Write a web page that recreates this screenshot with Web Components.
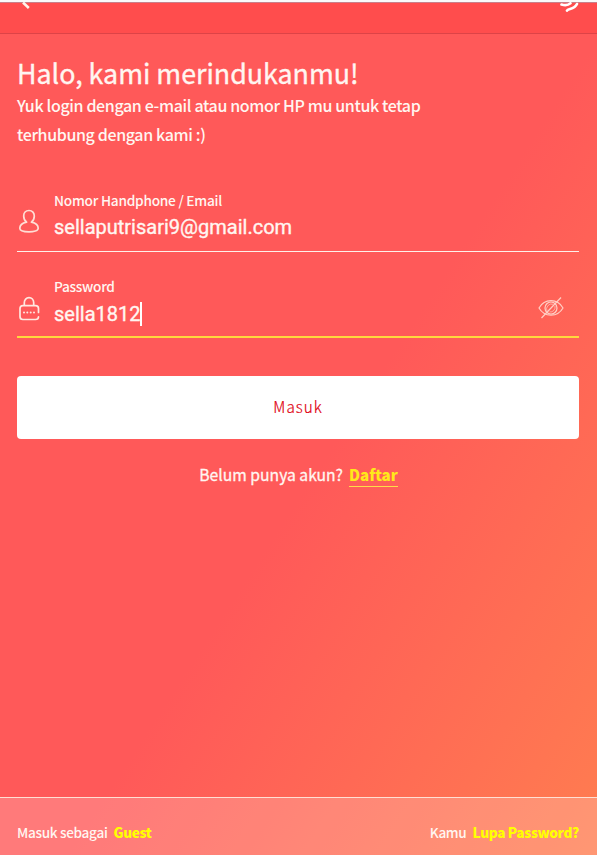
<!DOCTYPE html>
<html lang="id">
<head>
<meta charset="utf-8">
<title>Login</title>
<style>
html,body{margin:0;height:100%}
body{font-family:"Noto Sans CJK SC","Noto Sans CJK JP","Open Sans",sans-serif;color:#fff6f1;overflow:hidden}
</style>
</head>
<body>
<login-page></login-page>
<script>
const define=(name,html)=>customElements.define(name,class extends HTMLElement{
  constructor(){
    super();
    const t=document.createElement('template');
    t.innerHTML=html;
    this.attachShadow({mode:'open'}).append(t.content.cloneNode(true));
  }
});

define('top-bar',`<style>
:host{display:flex;justify-content:space-between;box-sizing:border-box;height:34px;padding:0 17px 0 19px;background:#ff4d4d;border-top:2px solid #fafafa;border-bottom:1px solid #dd4347;box-shadow:inset 0 1px #c9808a}
svg{display:block}
</style>
<svg width="14" height="10" viewBox="0 0 14 10"><path d="M4 .5L9.800 6" fill="none" stroke="#fff3ea" stroke-width="2.600"/></svg>
<svg width="24" height="12" viewBox="0 0 24 12" fill="none" stroke="#fff" stroke-width="2.600" stroke-linecap="round"><path d="M5.500 2.500C9 3.600 12.500 3 14.500 1.300M11 8.600C12 6.500 18.500 7.500 21 2"/></svg>`);

define('welcome-text',`<style>
:host{display:block;padding:23px 17px 0}
h1,p{margin:0;white-space:nowrap}
h1{font-size:26.800px;line-height:32px;font-weight:400;-webkit-text-stroke:.35px}
p{font-size:16px;line-height:29px;font-weight:500;letter-spacing:-.36px;padding-top:2px}
</style>
<h1><slot name="title"></slot></h1><p><slot></slot></p>`);

define('user-icon',`<style>:host,svg{display:block}</style>
<svg width="24" height="26" viewBox="0 0 24 26" fill="none" stroke="#ffded5" stroke-width="1.700" stroke-linejoin="round"><path d="M12 1.500C8.600 1.500 6.700 3.900 6.700 7C6.700 9.600 7.800 11.800 9.600 13.200C5.800 14 2.800 15.800 2.800 19.300C2.800 21.800 7.500 22.900 12 22.900S21.200 21.800 21.200 19.300C21.200 15.800 18.200 14 14.400 13.200C16.200 11.800 17.300 9.600 17.300 7C17.300 3.900 15.400 1.500 12 1.500Z"/></svg>`);

define('lock-icon',`<style>:host,svg{display:block}</style>
<svg width="24" height="26" viewBox="0 0 24 26" fill="none" stroke="#ffe8e0" stroke-width="1.700" stroke-linecap="round"><path d="M7.300 9.500V6.800C7.300 3.800 9.300 1.700 12 1.700S16.700 3.800 16.700 6.800V9.500M21.500 16.500V12.500Q21.500 9.700 18.500 9.700H5.800Q3 9.700 3 12.500V20.500Q3 23.500 5.800 23.500H18.500Q21.500 23.500 21.500 20.800"/><path d="M7 16.500h.01M10.300 16.500h.01M13.700 16.500h.01M17 16.500h.01" stroke-width="2"/></svg>`);

define('eye-off-icon',`<style>:host,svg{display:block}</style>
<svg width="28" height="24" viewBox="0 0 28 24" fill="none" stroke="#ffcfc5" stroke-width="1.200"><path d="M2 12C7.500 2.200 20.500 2.200 26 12C20.500 21.500 7.500 21.500 2 12Z"/><circle cx="14" cy="12" r="6"/><path d="M4.500 22L24 1.500"/><path d="M10 15A5 5 0 0 1 16 8.200M18 10A5 5 0 0 1 12.500 16" stroke-width=".7"/></svg>`);

define('form-field',`<style>
:host{display:flex;box-sizing:border-box;margin:0 18px 0 17px;border-bottom:var(--line,1px solid #fff0ea)}
.icon{width:37px;padding-top:var(--icon-top,19px)}
.text{flex:1}
.label{font-size:13.700px;line-height:20px;font-weight:500;letter-spacing:var(--label-spacing,-.26px)}
.value{display:flex;align-items:center;font:400 20px/24px Roboto,sans-serif;height:28px;margin-top:var(--value-top,3px);-webkit-text-stroke:.35px}
.action{padding:20px 14px 0 0}
</style>
<div class="icon"><slot name="icon"></slot></div>
<div class="text"><div class="label"><slot name="label"></slot></div><div class="value"><slot></slot></div></div>
<div class="action"><slot name="action"></slot></div>`);

define('text-caret',`<style>:host{display:block;width:2px;height:24px;margin-left:-1px;background:#fff}</style>`);

define('primary-button',`<style>
:host{display:block;margin:38px 18px 0 17px}
button{display:block;width:100%;height:63px;border:0;border-radius:4px;background:#fff;color:#e00010;font:300 15.300px/24px "Noto Sans CJK SC",sans-serif;letter-spacing:1px;padding:0 0 3px;-webkit-text-stroke:.2px}
</style><button><slot></slot></button>`);

define('text-link',`<style>
:host{display:inline-block;font-weight:900;color:var(--link-color,#ff0)}
</style><slot></slot>`);

define('bottom-bar',`<style>
:host{display:flex;justify-content:space-between;box-sizing:border-box;height:58px;padding:21px 18px 0 17px;border-top:1px solid #ffe0d4;background:rgba(255,255,255,.2);font-size:13.600px;line-height:26px;font-weight:500;letter-spacing:-.32px}
::slotted(span){display:flex;gap:6px;white-space:nowrap}
</style><slot></slot>`);

define('login-page',`<style>
:host{display:flex;flex-direction:column;height:855px;background:linear-gradient(123deg,#ff5959 0%,#ff5959 54%,#ff7d50 100%)}
.user{height:62px;margin-top:41px}
.pass{height:62px;margin-top:24px;--line:2px solid #ffd83d;--icon-top:20px;--label-spacing:-.3px;--value-top:4px}
.signup{display:flex;justify-content:center;gap:6px;margin-top:24px;font-size:15.700px;line-height:24px;-webkit-text-stroke:.3px}
.signup text-link{border-bottom:1px solid #ffdc48;--link-color:#ffe91a;height:23px;line-height:23px;font-size:15.100px;-webkit-text-stroke:0}
bottom-bar{margin-top:auto}
</style>
<top-bar></top-bar>
<welcome-text><span slot="title">Halo, kami merindukanmu!</span>Yuk login dengan e-mail atau nomor HP mu untuk tetap<br>terhubung dengan kami :)</welcome-text>
<form-field class="user"><user-icon slot="icon"></user-icon><span slot="label">Nomor Handphone / Email</span>sellaputrisari9@gmail.com</form-field>
<form-field class="pass"><lock-icon slot="icon"></lock-icon><span slot="label">Password</span>sella1812<text-caret></text-caret><eye-off-icon slot="action"></eye-off-icon></form-field>
<primary-button>Masuk</primary-button>
<div class="signup"><span>Belum punya akun?</span><text-link>Daftar</text-link></div>
<bottom-bar><span>Masuk sebagai <text-link>Guest</text-link></span><span>Kamu <text-link>Lupa Password?</text-link></span></bottom-bar>`);
</script>
</body>
</html>
